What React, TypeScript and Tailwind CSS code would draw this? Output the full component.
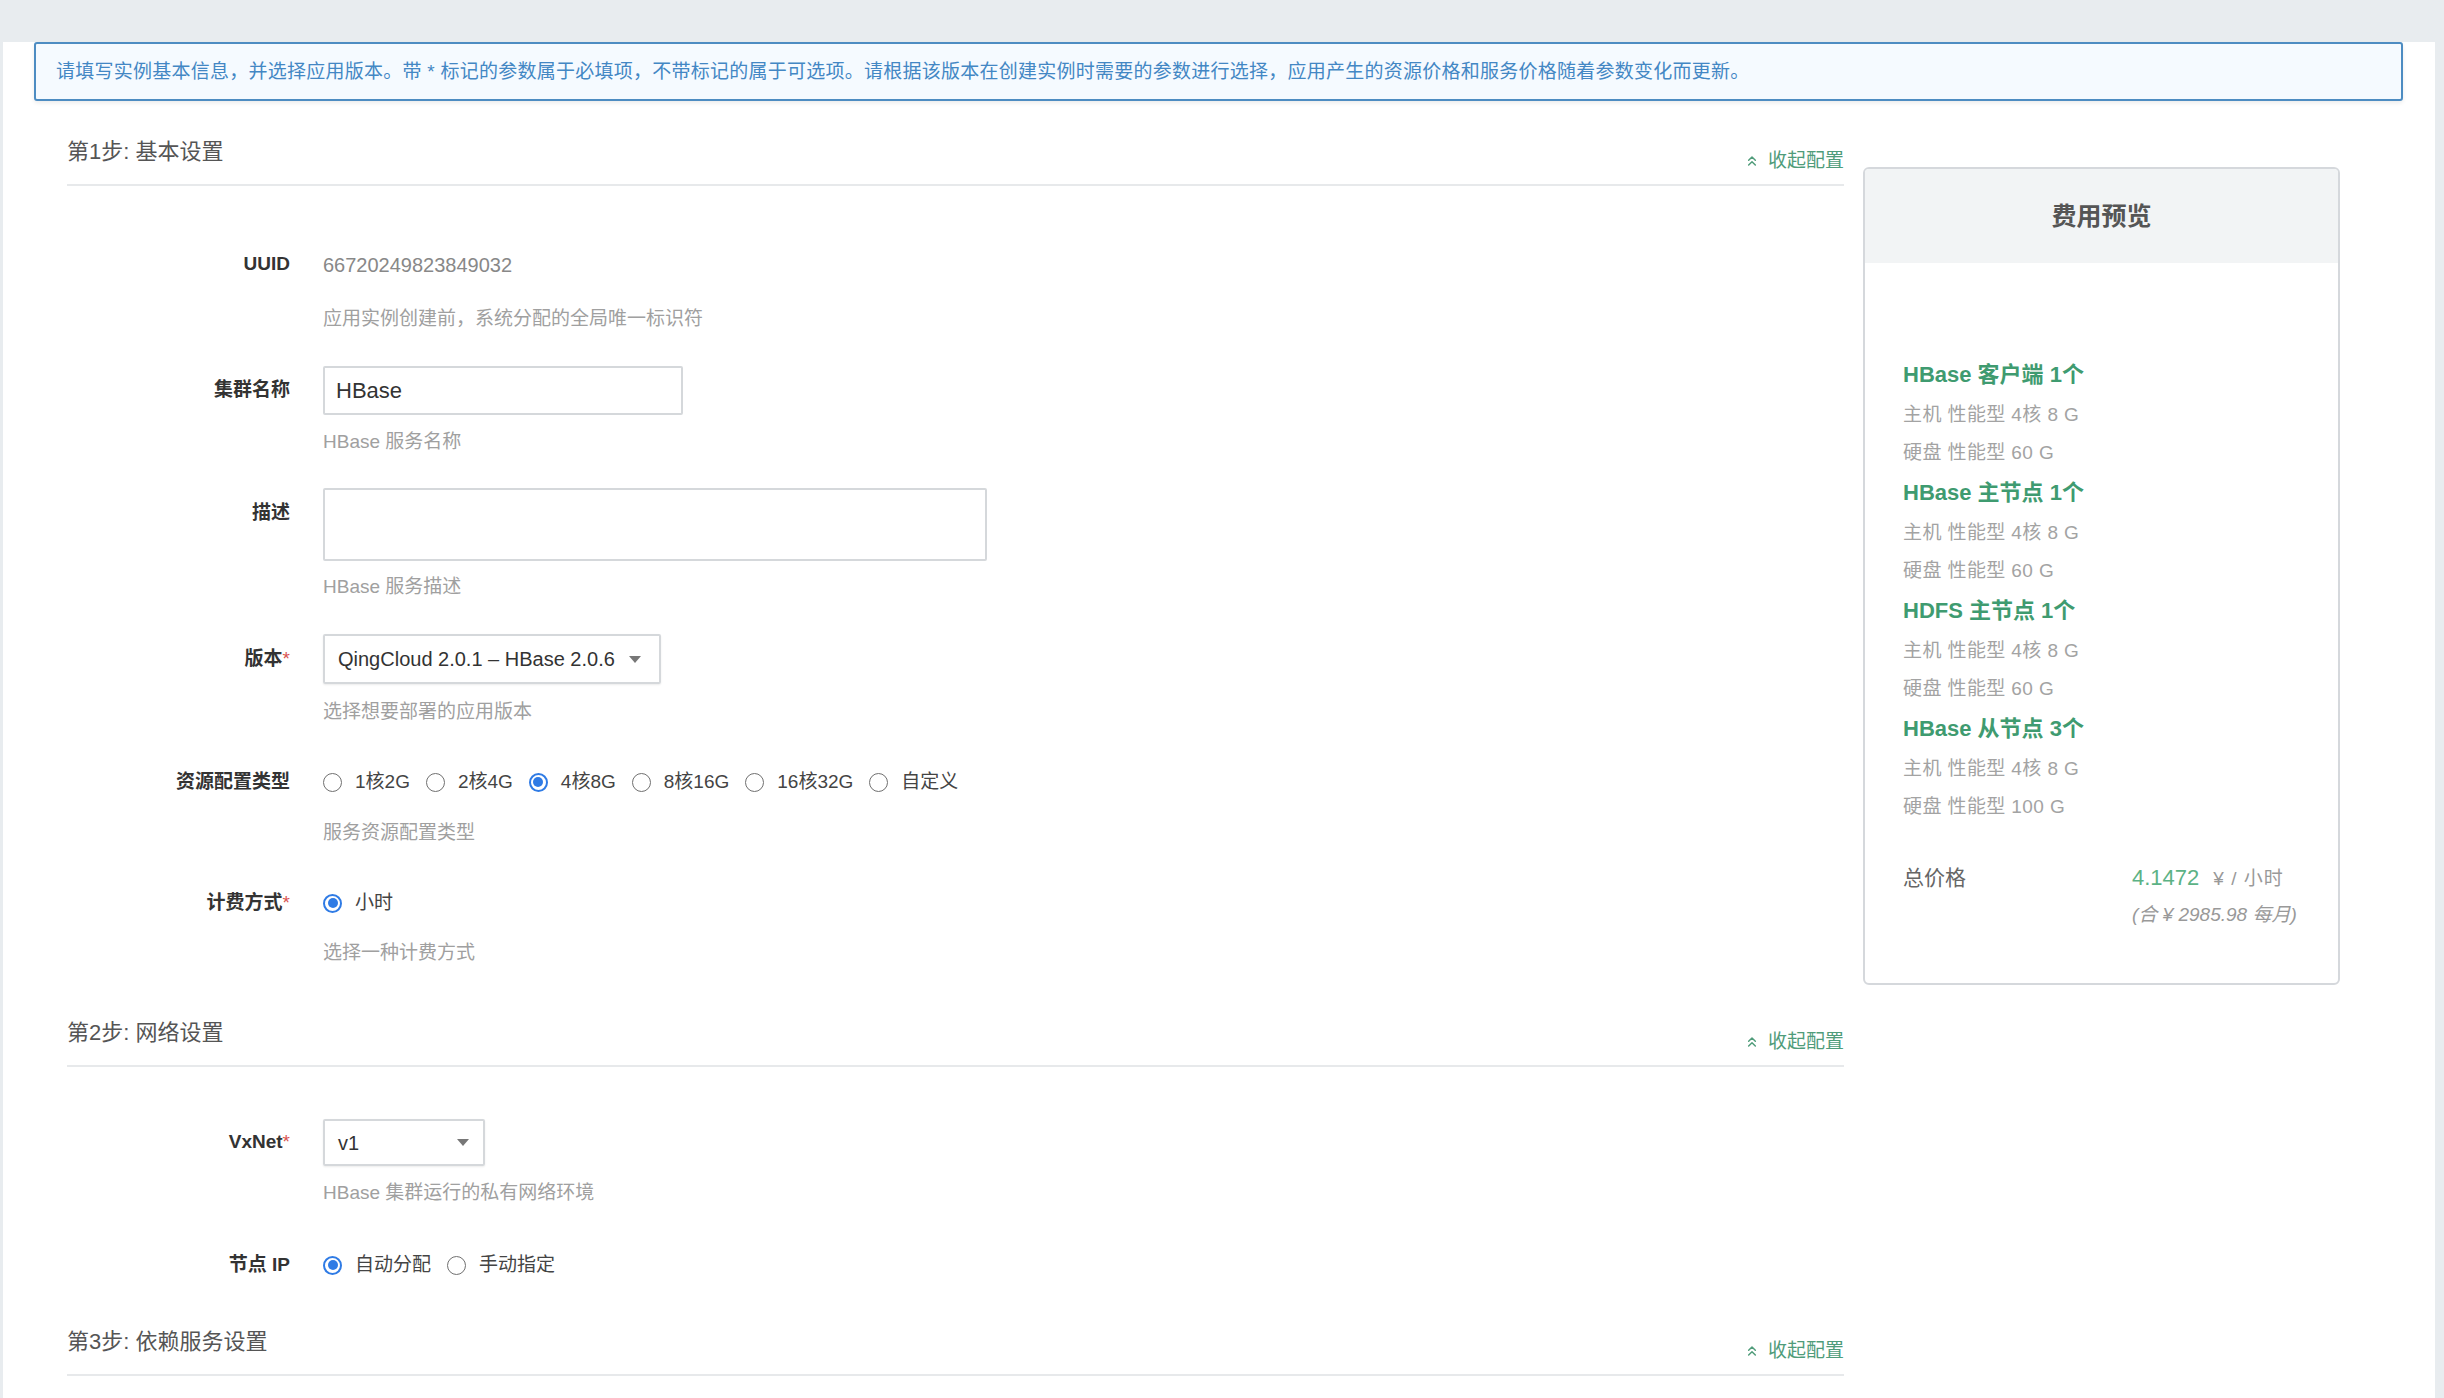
import React from "react";
import { ChevronsUp } from "lucide-react";

function StepHeader({ title, className = "" }: { title: string; className?: string }) {
  return (
    <div className={`flex h-[50px] items-start justify-between border-b-2 border-[#e7e9eb] ${className}`}>
      <div className="mt-[1px] text-[22px] leading-[30px] text-[#555]">{title}</div>
      <div className="mt-[13px] flex items-center gap-[8px] text-[19px] leading-[24px] text-[#4f9c7a]">
        <ChevronsUp size={16} strokeWidth={2.2} />
        <span>收起配置</span>
      </div>
    </div>
  );
}

function Label({ children, required, h }: { children: React.ReactNode; required?: boolean; h: string }) {
  return (
    <div className={`flex w-[223px] shrink-0 items-center justify-end text-[19px] font-semibold text-[#333] ${h}`}>
      <span>{children}</span>
      {required && <span className="font-normal text-[#d9534f]">*</span>}
    </div>
  );
}

function Help({ children, className = "" }: { children: React.ReactNode; className?: string }) {
  return (
    <div className={`ml-[256px] h-[28px] text-[19px] leading-[28px] text-[#a0a0a0] ${className}`}>{children}</div>
  );
}

function Radio({ checked }: { checked?: boolean }) {
  return checked ? (
    <div className="flex h-[19px] w-[19px] shrink-0 items-center justify-center rounded-full border-2 border-[#2f7be5] bg-white">
      <div className="h-[10px] w-[10px] rounded-full bg-[#2f7be5]" />
    </div>
  ) : (
    <div className="h-[19px] w-[19px] shrink-0 rounded-full border-[1.5px] border-[#707070] bg-white" />
  );
}

function RadioOpt({ label, checked }: { label: string; checked?: boolean }) {
  return (
    <div className="mr-[16px] flex items-center">
      <Radio checked={checked} />
      <span className="ml-[13px] text-[19px] leading-[28px] text-[#444]">{label}</span>
    </div>
  );
}

function Caret() {
  return (
    <svg width="12" height="7" viewBox="0 0 12 7">
      <path d="M0 0h12L6 7z" fill="#777" />
    </svg>
  );
}

function PriceItem({ title, disk }: { title: string; disk: string }) {
  return (
    <div>
      <div className="h-[42px] text-[22px] font-semibold leading-[42px] text-[#3f9b70]">{title}</div>
      <div className="h-[38px] text-[19px] leading-[38px] tracking-[0.4px] text-[#a3a3a3]">主机 性能型 4核 8 G</div>
      <div className="h-[38px] text-[19px] leading-[38px] tracking-[0.4px] text-[#a3a3a3]">{disk}</div>
    </div>
  );
}

export default function App() {
  return (
    <div className="h-[1398px] w-[2444px] overflow-hidden bg-[#e8ecef] pl-[3px] pr-[9px] pt-[6px] font-['Liberation_Sans','Noto_Sans_CJK_SC',sans-serif]">
      <div className="h-[1388px] bg-white">
        {/* alert */}
        <div className="ml-[31px] mt-[36px] flex h-[59px] w-[2369px] items-center rounded-[3px] border-2 border-[#4d8cc2] bg-[#f5faff] pl-[20px] pt-[2px] text-[19px] tracking-[0.25px] text-[#4387c4] shadow-[0_2px_4px_rgba(0,0,0,0.08)]">
          请填写实例基本信息，并选择应用版本。带 * 标记的参数属于必填项，不带标记的属于可选项。请根据该版本在创建实例时需要的参数进行选择，应用产生的资源价格和服务价格随着参数变化而更新。
        </div>

        <div className="ml-[64px] mt-[35px] flex gap-[19px]">
          {/* left form */}
          <div className="w-[1777px]">
            <StepHeader title="第1步: 基本设置" />

            {/* UUID */}
            <div className="mt-[64px] flex">
              <Label h="h-[28px]">UUID</Label>
              <div className="ml-[33px] text-[20px] leading-[30px] text-[#888]">66720249823849032</div>
            </div>
            <Help className="mt-[25px]">应用实例创建前，系统分配的全局唯一标识符</Help>

            {/* name */}
            <div className="mt-[33px] flex">
              <Label h="h-[49px]">集群名称</Label>
              <div className="ml-[33px] flex h-[49px] w-[360px] items-center rounded-[2px] border-2 border-[#d5d8db] pl-[11px] text-[22px] text-[#333]">
                HBase
              </div>
            </div>
            <Help className="mt-[13px]">HBase 服务名称</Help>

            {/* desc */}
            <div className="mt-[32px] flex">
              <Label h="h-[50px]">描述</Label>
              <div className="ml-[33px] h-[73px] w-[664px] rounded-[2px] border-2 border-[#d5d8db]" />
            </div>
            <Help className="mt-[12px]">HBase 服务描述</Help>

            {/* version */}
            <div className="mt-[33px] flex">
              <Label h="h-[50px]" required>
                版本
              </Label>
              <div className="ml-[33px] flex h-[50px] w-[338px] items-center justify-between rounded-[2px] border-2 border-[#d5d8db] pl-[13px] pr-[18px] text-[20px] text-[#333] shadow-[0_1px_2px_rgba(0,0,0,0.08)]">
                <span>QingCloud 2.0.1 – HBase 2.0.6</span>
                <Caret />
              </div>
            </div>
            <Help className="mt-[14px]">选择想要部署的应用版本</Help>

            {/* resource type */}
            <div className="mt-[42px] flex">
              <Label h="h-[28px]">资源配置类型</Label>
              <div className="ml-[33px] flex h-[28px] items-center">
                <RadioOpt label="1核2G" />
                <RadioOpt label="2核4G" />
                <RadioOpt label="4核8G" checked />
                <RadioOpt label="8核16G" />
                <RadioOpt label="16核32G" />
                <RadioOpt label="自定义" />
              </div>
            </div>
            <Help className="mt-[23px]">服务资源配置类型</Help>

            {/* billing */}
            <div className="mt-[42px] flex">
              <Label h="h-[28px]" required>
                计费方式
              </Label>
              <div className="ml-[33px] flex h-[28px] items-center">
                <RadioOpt label="小时" checked />
              </div>
            </div>
            <Help className="mt-[22px]">选择一种计费方式</Help>

            <StepHeader title="第2步: 网络设置" className="mt-[50px]" />

            {/* vxnet */}
            <div className="mt-[52px] flex">
              <Label h="h-[47px]" required>
                VxNet
              </Label>
              <div className="ml-[33px] flex h-[47px] w-[162px] items-center justify-between rounded-[2px] border-2 border-[#d5d8db] pl-[13px] pr-[14px] text-[20px] text-[#333] shadow-[0_1px_2px_rgba(0,0,0,0.08)]">
                <span>v1</span>
                <Caret />
              </div>
            </div>
            <Help className="mt-[13px]">HBase 集群运行的私有网络环境</Help>

            {/* node ip */}
            <div className="mt-[44px] flex">
              <Label h="h-[28px]">节点 IP</Label>
              <div className="ml-[33px] flex h-[28px] items-center">
                <RadioOpt label="自动分配" checked />
                <RadioOpt label="手动指定" />
              </div>
            </div>

            <StepHeader title="第3步: 依赖服务设置" className="mt-[47px]" />
          </div>

          {/* right price panel */}
          <div className="mt-[31px] w-[477px] self-start overflow-hidden rounded-[6px] border-2 border-[#d5d8dc]">
            <div className="flex h-[94px] items-center justify-center bg-[#f2f4f5] pt-[2px] text-[25px] font-semibold text-[#555]">
              费用预览
            </div>
            <div className="pb-[54px] pl-[38px] pt-[91px]">
              <PriceItem title="HBase 客户端 1个" disk="硬盘 性能型 60 G" />
              <PriceItem title="HBase 主节点 1个" disk="硬盘 性能型 60 G" />
              <PriceItem title="HDFS 主节点 1个" disk="硬盘 性能型 60 G" />
              <PriceItem title="HBase 从节点 3个" disk="硬盘 性能型 100 G" />
              <div className="mt-[38px] flex">
                <div className="w-[229px] text-[21px] leading-[28px] text-[#666]">总价格</div>
                <div>
                  <div className="leading-[28px]">
                    <span className="text-[22px] text-[#5cb285]">4.1472</span>
                    <span className="ml-[14px] text-[19px] tracking-[1px] text-[#999]">¥ / 小时</span>
                  </div>
                  <div className="mt-[7px] text-[19px] italic leading-[28px] text-[#999]">(合 ¥ 2985.98 每月)</div>
                </div>
              </div>
            </div>
          </div>
        </div>
      </div>
    </div>
  );
}
